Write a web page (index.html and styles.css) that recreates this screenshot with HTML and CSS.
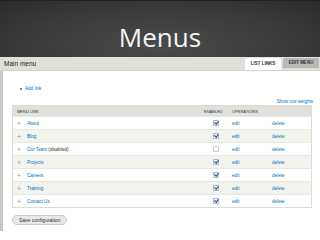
FILE: index.html
```html
<!DOCTYPE html>
<html lang="en">
<head>
    <title>Menus</title>
    <meta charset="UTF-8" />
    <link rel="stylesheet" href="styles.css">
</head>
<body>
    <header class="slide-title">Menus</header>

    <div class="page-head">
        <h2>Main menu</h2>
        <ul class="tabs">
            <li class="active">LIST LINKS</li>
            <li>EDIT MENU</li>
        </ul>
    </div>

    <div class="content">
        <ul class="action-links">
            <li><a href="#">Add link</a></li>
        </ul>
        <div class="weights"><a href="#">Show row weights</a></div>

        <table class="menu-table">
            <thead>
                <tr>
                    <th>Menu link</th>
                    <th class="col-enabled">Enabled</th>
                    <th colspan="2">Operations</th>
                </tr>
            </thead>
            <tbody id="tableBody">
            </tbody>
        </table>

        <button class="save">Save configuration</button>
    </div>

    <script>
        const links = [
            { title: 'About', enabled: true },
            { title: 'Blog', enabled: true },
            { title: 'Our Team', enabled: false },
            { title: 'Projects', enabled: true },
            { title: 'Careers', enabled: true },
            { title: 'Training', enabled: true },
            { title: 'Contact Us', enabled: true }
        ];

        const tbody = document.getElementById('tableBody');
        links.forEach(link => {
            const row = document.createElement('tr');
            row.innerHTML = `
                <td><span class="handle">+</span><a href="#">${link.title}</a>${link.enabled ? '' : ' (disabled)'}</td>
                <td class="col-enabled"><span class="check ${link.enabled ? 'on' : ''}"></span></td>
                <td class="col-edit"><a href="#">edit</a></td>
                <td class="col-delete"><a href="#">delete</a></td>
            `;
            tbody.appendChild(row);
        });
    </script>
</body>
</html>
```

FILE: styles.css
```css
body {
    margin: 0;
    font-family: "Liberation Sans", Arial, sans-serif;
    background: #fff;
    color: #333;
}
a {
    color: #0074bd;
    text-decoration: none;
}

.slide-title {
    height: 57px;
    box-sizing: border-box;
    padding-top: 21px;
    text-align: center;
    font-family: "Open Sans", sans-serif;
    font-size: 26px;
    line-height: 30px;
    color: #f4f4f4;
    background: radial-gradient(ellipse at 50% 80%, #4a4a4a 0%, #3a3a3a 60%, #2c2c2c 100%);
    border-top: 1px solid #222;
}

.page-head {
    display: flex;
    justify-content: space-between;
    align-items: flex-end;
    height: 13px;
    background: #e0e0d8;
    border-bottom: 1px solid #d4d4cc;
}
.page-head h2 {
    margin: 0 0 0 4px;
    align-self: center;
    font-size: 6.5px;
    font-weight: normal;
    color: #222;
}
.tabs {
    display: flex;
    list-style: none;
    margin: 0 1px 0 0;
    padding: 0;
    gap: 2px;
}
.tabs li {
    height: 10px;
    width: 36px;
    line-height: 10px;
    text-align: center;
    font-size: 4.5px;
    font-weight: bold;
    color: #333;
    background: #b8b8b4;
    border-radius: 2px 2px 0 0;
}
.tabs li.active {
    height: 12px;
    line-height: 12px;
    background: #fff;
}

.content {
    border-left: 3px solid #c9c9c4;
    padding: 15px 8px 5px 9px;
}

.action-links {
    list-style: none;
    margin: 0 0 0 8px;
    padding: 0;
    font-size: 4.6px;
}
.action-links li::before {
    content: "";
    display: inline-block;
    width: 2px;
    height: 2px;
    border-radius: 50%;
    background: #0074bd;
    margin-right: 3px;
    vertical-align: middle;
}

.weights {
    text-align: right;
    font-size: 4.5px;
    margin-top: 8px;
    margin-right: -1px;
}

.menu-table {
    width: 300px;
    border-collapse: collapse;
    margin-top: 1px;
    font-size: 4.6px;
    border: 1px solid #dcdcd6;
}
.menu-table th {
    height: 10px;
    padding: 0 4px;
    text-align: left;
    font-size: 4px;
    font-weight: normal;
    text-transform: uppercase;
    color: #333;
    background: #e1e1db;
}
.menu-table td {
    height: 12px;
    padding: 0 4px;
    border-top: 1px solid #e8e8e2;
}
.menu-table tbody tr:nth-child(even) td {
    background: #f3f3ee;
}
.handle {
    display: inline-block;
    width: 10px;
    color: #999;
    font-size: 7px;
    vertical-align: -1px;
}
.menu-table th.col-enabled {
    text-align: left;
}
.col-enabled {
    width: 20px;
    text-align: center;
}
.col-edit {
    width: 32px;
}
.col-delete {
    width: 35px;
}
.check {
    display: inline-block;
    width: 4px;
    height: 4px;
    border: 0.5px solid #ccc;
    background: #fff;
    border-radius: 1px;
    position: relative;
    margin-left: 4px;
}
.check.on {
    background: #f2f4fa;
    border-color: #a8b4c8;
}
.check.on::after {
    content: "";
    position: absolute;
    left: 1px;
    top: -1px;
    width: 1.5px;
    height: 3px;
    border: solid #1a3f8a;
    border-width: 0 1.2px 1.2px 0;
    transform: rotate(40deg);
}

.save {
    margin-top: 4px;
    height: 10px;
    padding: 0 6px;
    font-family: "Liberation Sans", Arial, sans-serif;
    font-size: 5px;
    color: #333;
    background: #e8e8e6;
    border: 1px solid #ccc;
    border-radius: 5px;
}
```
